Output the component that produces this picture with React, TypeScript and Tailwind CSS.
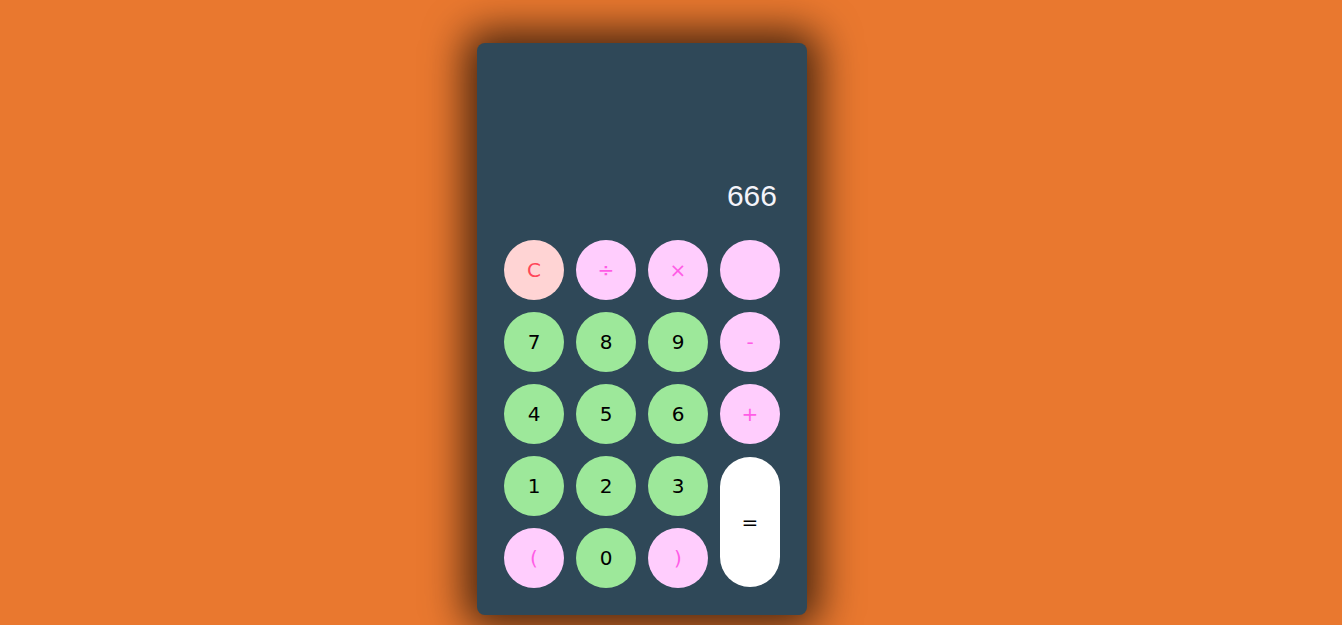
import React from "react";

type Key = { label: string; kind: "num" | "op" | "clear" };

const keys: Key[] = [
  { label: "C", kind: "clear" },
  { label: "÷", kind: "op" },
  { label: "×", kind: "op" },
  { label: "", kind: "op" },
  { label: "7", kind: "num" },
  { label: "8", kind: "num" },
  { label: "9", kind: "num" },
  { label: "-", kind: "op" },
  { label: "4", kind: "num" },
  { label: "5", kind: "num" },
  { label: "6", kind: "num" },
  { label: "+", kind: "op" },
  { label: "1", kind: "num" },
  { label: "2", kind: "num" },
  { label: "3", kind: "num" },
];

const styles = {
  num: "bg-[#9de89a] text-black",
  op: "bg-[#ffcdfd] text-[#ff5ce6]",
  clear: "bg-[#ffd4d4] text-[#ff4659]",
};

const Btn = ({ k }: { k: Key }) => (
  <button
    className={`w-[60px] h-[60px] rounded-full flex items-center justify-center text-[20px] font-['DejaVu_Sans',sans-serif] ${styles[k.kind]}`}
  >
    {k.label}
  </button>
);

export default function App() {
  return (
    <div className="w-full h-[625px] bg-[#e9782f] overflow-hidden pt-[43px]">
      <div className="ml-[477px] w-[330px] h-[572px] bg-[#2f4858] rounded-[8px] shadow-[0_0_40px_12px_rgba(0,0,0,0.7)] p-[27px] flex flex-col">
        <div className="flex-1 flex items-end justify-end pr-[3px] mb-[26px]">
          <span className="text-[30px] leading-[36px] text-[#f4f4fa] font-['Liberation_Sans',Arial,sans-serif]">
            666
          </span>
        </div>
        <div className="grid grid-cols-[repeat(4,60px)] grid-rows-[repeat(5,60px)] gap-[12px]">
          {keys.map((k, i) => (
            <Btn key={i} k={k} />
          ))}
          <button className="row-span-2 col-start-4 row-start-4 my-[1px] rounded-full bg-white text-black text-[20px] font-['DejaVu_Sans',sans-serif] flex items-center justify-center">
            =
          </button>
          <Btn k={{ label: "(", kind: "op" }} />
          <Btn k={{ label: "0", kind: "num" }} />
          <Btn k={{ label: ")", kind: "op" }} />
        </div>
      </div>
    </div>
  );
}
